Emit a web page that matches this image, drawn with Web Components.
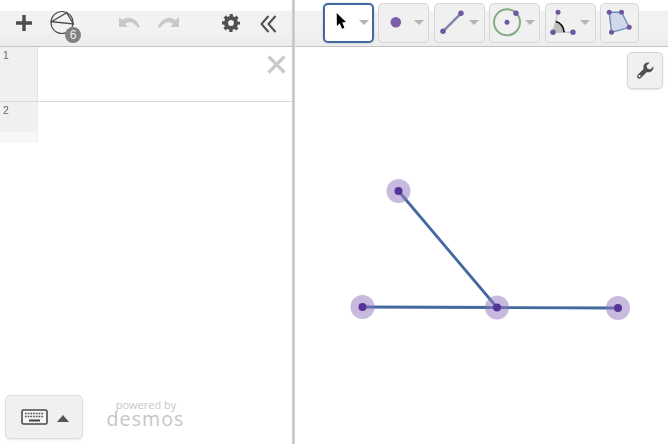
<!DOCTYPE html>
<html>
<head>
<meta charset="utf-8">
<style>
  html, body { margin: 0; height: 100%; background: #fff; overflow: hidden; }
  body { font-family: "Liberation Sans", Arial, sans-serif; }
</style>
</head>
<body>
<dg-app>
  <dg-expr-panel slot="left">
    <dg-expr-row num="1" closable></dg-expr-row>
    <dg-expr-row num="2" last></dg-expr-row>
  </dg-expr-panel>
  <dg-tool-bar slot="right">
    <dg-tool-button selected caret>
      <svg width="34" height="35" viewBox="0 0 34 35"><path d="M11.700 8 L11.900 21 L14.800 18.300 L17 23.800 L19.400 22.700 L17.200 17.500 L21 17 Z" fill="#000"/></svg>
    </dg-tool-button>
    <dg-tool-button caret>
      <svg width="34" height="37" viewBox="0 0 34 37"><circle cx="16.800" cy="18.300" r="5.300" fill="#7b5fa8"/></svg>
    </dg-tool-button>
    <dg-tool-button caret>
      <svg width="34" height="37" viewBox="0 0 34 37"><line x1="8" y1="27.300" x2="26" y2="9.300" stroke="#7e8ba6" stroke-width="2.500"/><circle cx="8" cy="27.300" r="2.700" fill="#6f56a0"/><circle cx="26" cy="9.300" r="2.700" fill="#6f56a0"/></svg>
    </dg-tool-button>
    <dg-tool-button caret>
      <svg width="34" height="37" viewBox="0 0 34 37"><circle cx="17" cy="18.300" r="13" fill="none" stroke="#84ab84" stroke-width="2"/><circle cx="17" cy="18.300" r="2.500" fill="#6f56a0"/><circle cx="26" cy="9.300" r="2.700" fill="#6f56a0"/></svg>
    </dg-tool-button>
    <dg-tool-button caret>
      <svg width="34" height="37" viewBox="0 0 34 37"><path d="M7 28.300 L12 8.300 M7 28.300 L27 28.300" stroke="#c8c8c8" stroke-width="1.500" fill="none"/><path d="M7 28.300 L9.800 17.500 A11 11 0 0 1 18 28.300 Z" fill="#bdbdbd"/><path d="M9.800 17.500 A11 11 0 0 1 18 28.300" stroke="#111" stroke-width="1.800" fill="none"/><circle cx="7" cy="28.300" r="2.700" fill="#6f56a0"/><circle cx="12" cy="8.300" r="2.500" fill="#6f56a0"/><circle cx="27" cy="28.300" r="2.700" fill="#6f56a0"/></svg>
    </dg-tool-button>
    <dg-tool-button>
      <svg width="37" height="37" viewBox="0 0 37 37"><path d="M8.200 8.300 L20.500 8.300 L28.200 23.300 L10.500 28.300 Z" fill="#cfd9ea" stroke="#6f8cc0" stroke-width="1.400"/><circle cx="8.200" cy="8.300" r="2.500" fill="#6f56a0"/><circle cx="20.500" cy="8.300" r="2.500" fill="#6f56a0"/><circle cx="28.200" cy="23.300" r="2.500" fill="#6f56a0"/><circle cx="10.500" cy="28.300" r="2.500" fill="#6f56a0"/></svg>
    </dg-tool-button>
  </dg-tool-bar>
  <dg-canvas slot="right"></dg-canvas>
</dg-app>

<template id="app-tpl">
  <style>
    :host { display: grid; grid-template-columns: 292px 3px 1fr; width: 668px; height: 444px; }
    .col { display: flex; flex-direction: column; min-width: 0; position: relative; }
    .rule { background: linear-gradient(90deg, #d4d4d4, #c2c2c2 50%, #dedede); }
  </style>
  <div class="col"><slot name="left"></slot></div>
  <div class="rule"></div>
  <div class="col"><slot name="right"></slot></div>
</template>

<template id="panel-tpl">
  <style>
    :host { display: flex; flex-direction: column; height: 444px; position: relative; color: #555; }
    .bar {
      height: 35px; margin-top: 11px; flex: none; display: flex; align-items: flex-start;
      background: linear-gradient(#f2f2f2, #f2f2f2 50%, #ececec);
      border-bottom: 1px solid #c4c4c4;
    }
    svg { display: block; flex: none; }
    .plus { margin: 3px 0 0 15px; }
    .geo { margin: 0 0 0 17px; }
    .undo { margin: 4.500px 0 0 44px; }
    .redo { margin: 4.500px 0 0 18px; }
    .gear { margin: 3px 0 0 43px; }
    .hide { margin: 4px 0 0 20px; }
    .badge {
      position: absolute; left: 65px; top: 27px; width: 16px; height: 16px; border-radius: 50%;
      background: #808080; color: #eee; font-size: 12px; line-height: 16px; text-align: center;
    }
    .brand {
      position: absolute; left: 106px; top: 399px; width: 79px; text-align: center; color: #c6c6c6;
      font-family: "Open Sans", sans-serif;
    }
    .brand .by { font-size: 11px; line-height: 12px; display: block; margin-left: 1px; }
    .brand .name { font-size: 19.500px; line-height: 19px; display: block; letter-spacing: 1.100px; margin-top: -2px; }
    .keys {
      position: absolute; left: 5px; top: 395px; width: 78px; height: 44px; box-sizing: border-box;
      border: 1px solid #dcdcdc; border-radius: 5px; background: #f0f0f0;
      box-shadow: 0 1px 2px rgba(0,0,0,.08);
      display: flex; align-items: center; padding-left: 15px; gap: 9px;
    }
    .tri { width: 0; height: 0; border: 6.500px solid transparent; border-top: 0; border-bottom: 7px solid #555; margin-top: 2px; }
  </style>
  <div class="bar">
    <svg class="plus" width="18" height="18" viewBox="0 0 18 18"><path d="M9 1v16M1 9h16" stroke="#4c4c4c" stroke-width="3.400"/></svg>
    <svg class="geo" width="25" height="24" viewBox="0 0 25 24"><circle cx="12" cy="11.500" r="11" fill="none" stroke="#4a4a4a" stroke-width="1.100"/><path d="M1.500 10.700 L16.700 1.700 L23.300 13 Z" fill="none" stroke="#4a4a4a" stroke-width="1.300"/></svg>
    <svg class="undo" width="21" height="14" viewBox="0 0 21 14"><path d="M0 1 L0 11 L9 11 L6 8 C10 5 15 6 19 12 L21 11 C18 3 10 -1 3.500 4 Z" fill="#c9c9c9"/></svg>
    <svg class="redo" width="21" height="14" viewBox="0 0 21 14"><path d="M21 1 L21 11 L12 11 L15 8 C11 5 6 6 2 12 L0 11 C3 3 11 -1 17.500 4 Z" fill="#c9c9c9"/></svg>
    <svg class="gear" width="18" height="18" viewBox="0 0 18 18"><circle cx="9" cy="9" r="5" fill="none" stroke="#505050" stroke-width="4.200"/><circle cx="9" cy="9" r="7.600" fill="none" stroke="#505050" stroke-width="2.800" stroke-dasharray="3.200 2.770" stroke-dashoffset="1.600"/></svg>
    <svg class="hide" width="17" height="18" viewBox="0 0 17 18"><path d="M8.500 1 L1.500 9 L8.500 17 M15.500 1 L8.500 9 L15.500 17" fill="none" stroke="#505050" stroke-width="2"/></svg>
  </div>
  <span class="badge">6</span>
  <slot></slot>
  <div class="keys">
    <svg width="27" height="16" viewBox="0 0 27 16"><rect x="1" y="1" width="25" height="14" rx="1.500" fill="#f4f4f4" stroke="#4a4a4a" stroke-width="1.600"/><path d="M4 4.500h19M4 7.500h19" stroke="#555" stroke-width="1.500" stroke-dasharray="1.700 1"/><path d="M8 11.500h11" stroke="#444" stroke-width="2"/></svg>
    <span class="tri"></span>
  </div>
  <div class="brand"><span class="by">powered by</span><span class="name">desmos</span></div>
</template>

<template id="row-tpl">
  <style>
    :host { display: flex; height: 55px; position: relative; border-bottom: 1px solid #d8d8d8; box-sizing: border-box; }
    :host([last]) { border-bottom: 0; height: 41px; }
    .gutter {
      width: 38px; flex: none; background: #f0f0f0; border-right: 1px solid #e2e2e2;
      padding: 2px 0 0 3px; box-sizing: border-box;
    }
    /* the reference number has grey antialiasing, own layer gets that */
    .num { display: block; font-size: 10.500px; color: #666; line-height: 12px; will-change: opacity; opacity: .99; }
    :host([last]) .gutter { background: linear-gradient(#f0f0f0 30px, #f7f7f7 30px, #f7f7f7 40px, #fff); border-right-color: #eee; }
    .x { position: absolute; right: 6px; top: 8px; display: none; }
    :host([closable]) .x { display: block; }
  </style>
  <div class="gutter"><span class="num"></span></div>
  <svg class="x" width="19" height="19" viewBox="0 0 19 19"><path d="M1.500 1.500l16 16M17.500 1.500l-16 16" stroke="#c9c9c9" stroke-width="3.200"/></svg>
</template>

<template id="bar-tpl">
  <style>
    :host {
      display: flex; gap: 4.400px; height: 47px; flex: none; box-sizing: border-box; padding: 3px 0 0 28px;
      background: linear-gradient(#fff 11px, #f2f2f2 11px, #f2f2f2 28px, #ececec);
      border-bottom: 1px solid #c4c4c4;
    }
  </style>
  <slot></slot>
</template>

<template id="btn-tpl">
  <style>
    :host {
      display: flex; align-items: center; height: 39.500px; width: 39px; flex: none;
      box-sizing: border-box; border: 1px solid #d6d6d6; border-radius: 5px; background: #f0f0f0;
    }
    :host([caret]) { width: 51px; }
    :host([selected]) { background: #fff; border: 2px solid #44699f; box-shadow: 0 0 2px rgba(68,105,159,.4); }
    ::slotted(svg) { display: block; flex: none; }
    .caret { display: none; width: 0; height: 0; margin-left: auto; margin-right: 4.500px; border: 5.250px solid transparent; border-bottom: 0; border-top: 5.500px solid #b4b4b4; }
    :host([caret]) .caret { display: block; }
    :host([selected]) .caret { margin-right: 4px; }
  </style>
  <slot></slot>
  <span class="caret"></span>
</template>

<template id="canvas-tpl">
  <style>
    :host { display: block; flex: 1; position: relative; background: #fff; }
    svg.plot { position: absolute; left: 0; top: 0; }
    .wrench {
      position: absolute; left: 332px; top: 5px; width: 36px; height: 37px; box-sizing: border-box;
      border: 1px solid #d6d6d6; border-radius: 5px; background: #f0f0f0;
      box-shadow: 0 1px 2px rgba(0,0,0,.1); display: flex; align-items: center; justify-content: center;
    }
  </style>
  <svg class="plot" width="373" height="397" viewBox="295 47 373 397">
    <g stroke="#44699f" stroke-width="2.800">
      <line x1="398.500" y1="191" x2="497" y2="307.500"/>
      <line x1="362.500" y1="307" x2="497" y2="307.500"/>
      <line x1="497" y1="307.500" x2="618" y2="308"/>
    </g>
    <g fill="#8f75bd" fill-opacity=".5">
      <circle cx="398.500" cy="191" r="12"/>
      <circle cx="362.500" cy="307" r="12"/>
      <circle cx="497" cy="307.500" r="12"/>
      <circle cx="618" cy="308" r="12"/>
    </g>
    <g fill="#553399">
      <circle cx="398.500" cy="191" r="4"/>
      <circle cx="362.500" cy="307" r="4"/>
      <circle cx="497" cy="307.500" r="4"/>
      <circle cx="618" cy="308" r="4"/>
    </g>
  </svg>
  <div class="wrench">
    <svg width="17" height="17" viewBox="0 0 24 24"><path fill="#505050" d="M23 6.500 L18.500 10.500 L14.500 9 L13.500 5 L18 1 C13.500 -.5 9 2.500 9 7 C9 8 9.200 8.800 9.500 9.500 L1.200 18 C-.3 19.500 -.3 21 1 22.500 C2.500 23.800 4.200 23.800 5.500 22.500 L14 14.200 C18.500 16 24 12 23 6.500 Z"/><circle cx="3.500" cy="20" r="1.500" fill="#f0f0f0"/></svg>
  </div>
</template>

<script>
  function stamp(el, id) {
    const root = el.attachShadow({ mode: "open" });
    root.appendChild(document.getElementById(id).content.cloneNode(true));
    return root;
  }

  class DgApp extends HTMLElement {
    connectedCallback() { stamp(this, "app-tpl"); }
  }
  class DgExprPanel extends HTMLElement {
    connectedCallback() { stamp(this, "panel-tpl"); }
  }
  class DgExprRow extends HTMLElement {
    connectedCallback() {
      const root = stamp(this, "row-tpl");
      root.querySelector(".num").textContent = this.getAttribute("num");
    }
  }
  class DgToolBar extends HTMLElement {
    connectedCallback() { stamp(this, "bar-tpl"); }
  }
  class DgToolButton extends HTMLElement {
    connectedCallback() { stamp(this, "btn-tpl"); }
  }
  class DgCanvas extends HTMLElement {
    connectedCallback() { stamp(this, "canvas-tpl"); }
  }

  customElements.define("dg-app", DgApp);
  customElements.define("dg-expr-panel", DgExprPanel);
  customElements.define("dg-expr-row", DgExprRow);
  customElements.define("dg-tool-bar", DgToolBar);
  customElements.define("dg-tool-button", DgToolButton);
  customElements.define("dg-canvas", DgCanvas);
</script>
</body>
</html>
